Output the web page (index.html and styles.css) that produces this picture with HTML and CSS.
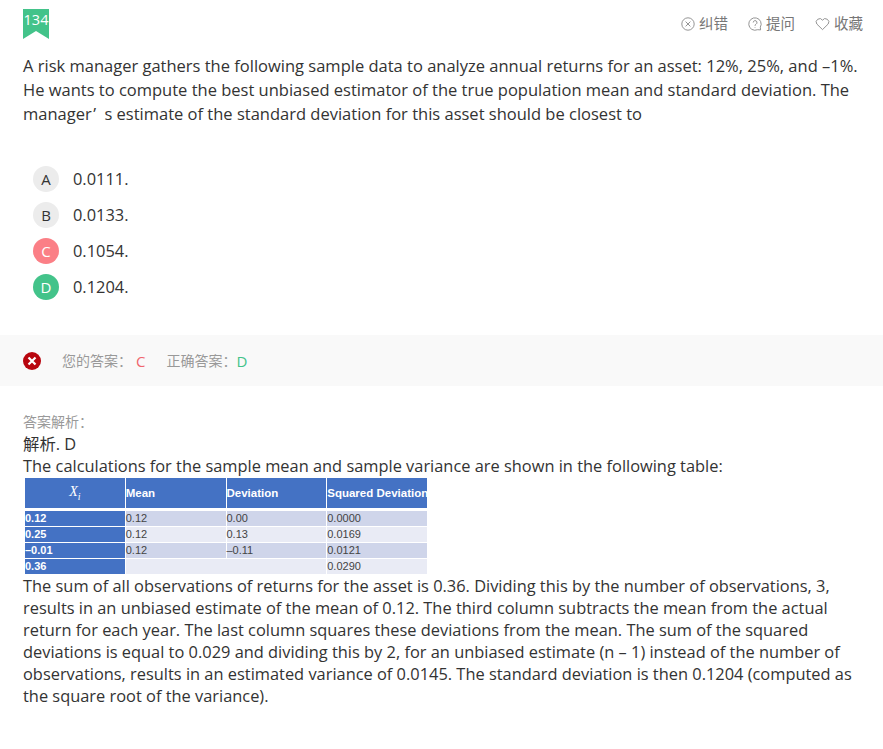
FILE: index.html
```html
<!DOCTYPE html>
<html lang="zh-CN">
<head>
    <meta charset="UTF-8">
    <meta name="viewport" content="width=device-width, initial-scale=1.0">
    <title>Question 134</title>
    <link rel="stylesheet" href="styles.css">
</head>
<body>
    <div class="top-bar">
        <div class="bookmark">134</div>
        <div class="actions">
            <span class="action">
                <svg viewBox="0 0 14 14" width="14" height="14"><circle cx="7" cy="7" r="6.2"/><path d="M4.6 4.6l4.8 4.8M9.4 4.6l-4.8 4.8"/></svg>
                纠错
            </span>
            <span class="action">
                <svg viewBox="0 0 14 14" width="14" height="14"><path d="M9.5 12.7A6.2 6.2 0 1 1 12.3 10.2L12.6 12.9Z"/><path d="M5.2 5.5a1.9 1.9 0 1 1 2.8 1.7C7.3 7.6 7 8 7 8.8M7 10.2v.6"/></svg>
                提问
            </span>
            <span class="action">
                <svg viewBox="0 0 15 14" width="15" height="14"><path d="M7.5 12.6L1.800 7A3.400 3.400 0 0 1 7.500 3.200 3.400 3.400 0 0 1 13.200 7Z"/></svg>
                收藏
            </span>
        </div>
    </div>

    <p class="question">A risk manager gathers the following sample data to analyze annual returns for an asset: 12%, 25%, and –1%. He wants to compute the best unbiased estimator of the true population mean and standard deviation. The manager&#8202;’&#8194;s estimate of the standard deviation for this asset should be closest to</p>

    <div class="options">
        <div class="option"><span class="letter">A</span>0.0111.</div>
        <div class="option"><span class="letter">B</span>0.0133.</div>
        <div class="option"><span class="letter wrong">C</span>0.1054.</div>
        <div class="option"><span class="letter right">D</span>0.1204.</div>
    </div>

    <div class="result">
        <svg class="result-icon" viewBox="0 0 18 18" width="18" height="18"><circle cx="9" cy="9" r="9"/><path d="M5.500 5.500l7 7M12.500 5.500l-7 7"/></svg>
        <span class="result-label">您的答案：</span><span class="your-answer">C</span>
        <span class="result-label">正确答案：</span><span class="right-answer">D</span>
    </div>

    <div class="analysis">
        <div class="analysis-title">答案解析：</div>
        <div>解析. D</div>
        <div>The calculations for the sample mean and sample variance are shown in the following table:</div>
        <table class="calc">
            <tr class="head"><th class="xi"><i>X<sub>i</sub></i></th><th>Mean</th><th>Deviation</th><th>Squared Deviation</th></tr>
            <tr class="dark"><th>0.12</th><td>0.12</td><td>0.00</td><td>0.0000</td></tr>
            <tr><th>0.25</th><td>0.12</td><td>0.13</td><td>0.0169</td></tr>
            <tr class="dark"><th>–0.01</th><td>0.12</td><td>–0.11</td><td>0.0121</td></tr>
            <tr><th>0.36</th><td colspan="2"></td><td>0.0290</td></tr>
        </table>
        <div>The sum of all observations of returns for the asset is 0.36. Dividing this by the number of observations, 3, results in an unbiased estimate of the mean of 0.12. The third column subtracts the mean from the actual return for each year. The last column squares these deviations from the mean. The sum of the squared deviations is equal to 0.029 and dividing this by 2, for an unbiased estimate (n – 1) instead of the number of observations, results in an estimated variance of 0.0145. The standard deviation is then 0.1204 (computed as the square root of the variance).</div>
    </div>
</body>
</html>
```

FILE: styles.css
```css
body {
    margin: 0;
    font-family: "Open Sans", "Noto Sans CJK SC", sans-serif;
    font-size: 16.4px;
    line-height: 24px;
    color: #333;
    background: #fff;
}

.top-bar {
    display: flex;
    justify-content: space-between;
    padding: 9px 20px 0 23px;
    height: 35px;
}

.bookmark {
    width: 26px;
    height: 30px;
    background: #43c38a;
    clip-path: polygon(0 0, 100% 0, 100% 100%, 50% 73%, 0 100%);
    color: #fff;
    font-size: 14.5px;
    line-height: 21px;
    text-align: center;
}

.actions {
    display: flex;
    gap: 20px;
    padding-top: 5px;
    font-size: 14.5px;
    line-height: 20px;
    color: #777;
}

.action {
    display: flex;
    align-items: center;
    gap: 4px;
    height: 20px;
}

.action svg {
    fill: none;
    stroke: #888;
    stroke-width: 0.9;
}

.question {
    margin: 10px 20px 0 23px;
    font-size: 16.5px;
}

.options {
    margin: 35px 0 0 33px;
}

.option {
    display: flex;
    align-items: center;
    height: 36px;
}

.letter {
    width: 26px;
    height: 26px;
    margin-right: 14px;
    border-radius: 50%;
    background: #ececec;
    font-size: 15px;
    line-height: 26px;
    text-align: center;
}

.letter.wrong {
    background: #fb7f86;
    color: #fff;
}

.letter.right {
    background: #43c38a;
    color: #fff;
}

.result {
    display: flex;
    align-items: center;
    height: 51px;
    margin-top: 30px;
    padding-left: 23px;
    background: #f9f9f9;
    font-size: 14px;
    color: #999;
}

.result-icon {
    margin-right: 21px;
}

.result-icon circle {
    fill: #b8060f;
}

.result-icon path {
    stroke: #fff;
    stroke-width: 2.2;
}

.your-answer {
    margin: 0 21px 0 4px;
    font-size: 15px;
    color: #f0656d;
}

.right-answer {
    font-size: 15px;
    color: #43c38a;
}

.analysis {
    margin: 25px 20px 0 23px;
    line-height: 22px;
}

.analysis-title {
    font-size: 14px;
    color: #999;
}

.calc {
    border-collapse: separate;
    border-spacing: 1px;
    margin: 0 0 0 1px;
    table-layout: fixed;
    width: 404px;
    font-family: "Liberation Sans", sans-serif;
    font-size: 11px;
    line-height: 13px;
}

.calc th, .calc td {
    padding: 0;
    height: 15px;
    text-align: left;
    font-weight: normal;
}

.calc th {
    background: #4472c4;
    color: #fff;
    font-weight: bold;
}

.calc td {
    background: #e9ebf5;
    color: #444;
}

.calc .dark td {
    background: #cfd5ea;
}

.calc .head th {
    height: 29px;
    padding-top: 1px;
    border-bottom: 2px solid #fff;
    font-size: 11.5px;
    white-space: nowrap;
    overflow: hidden;
}

.calc .head .xi {
    font-family: "Liberation Serif", serif;
    font-weight: normal;
    text-align: center;
    font-size: 14px;
}

.calc sub {
    font-size: 10px;
}
```
